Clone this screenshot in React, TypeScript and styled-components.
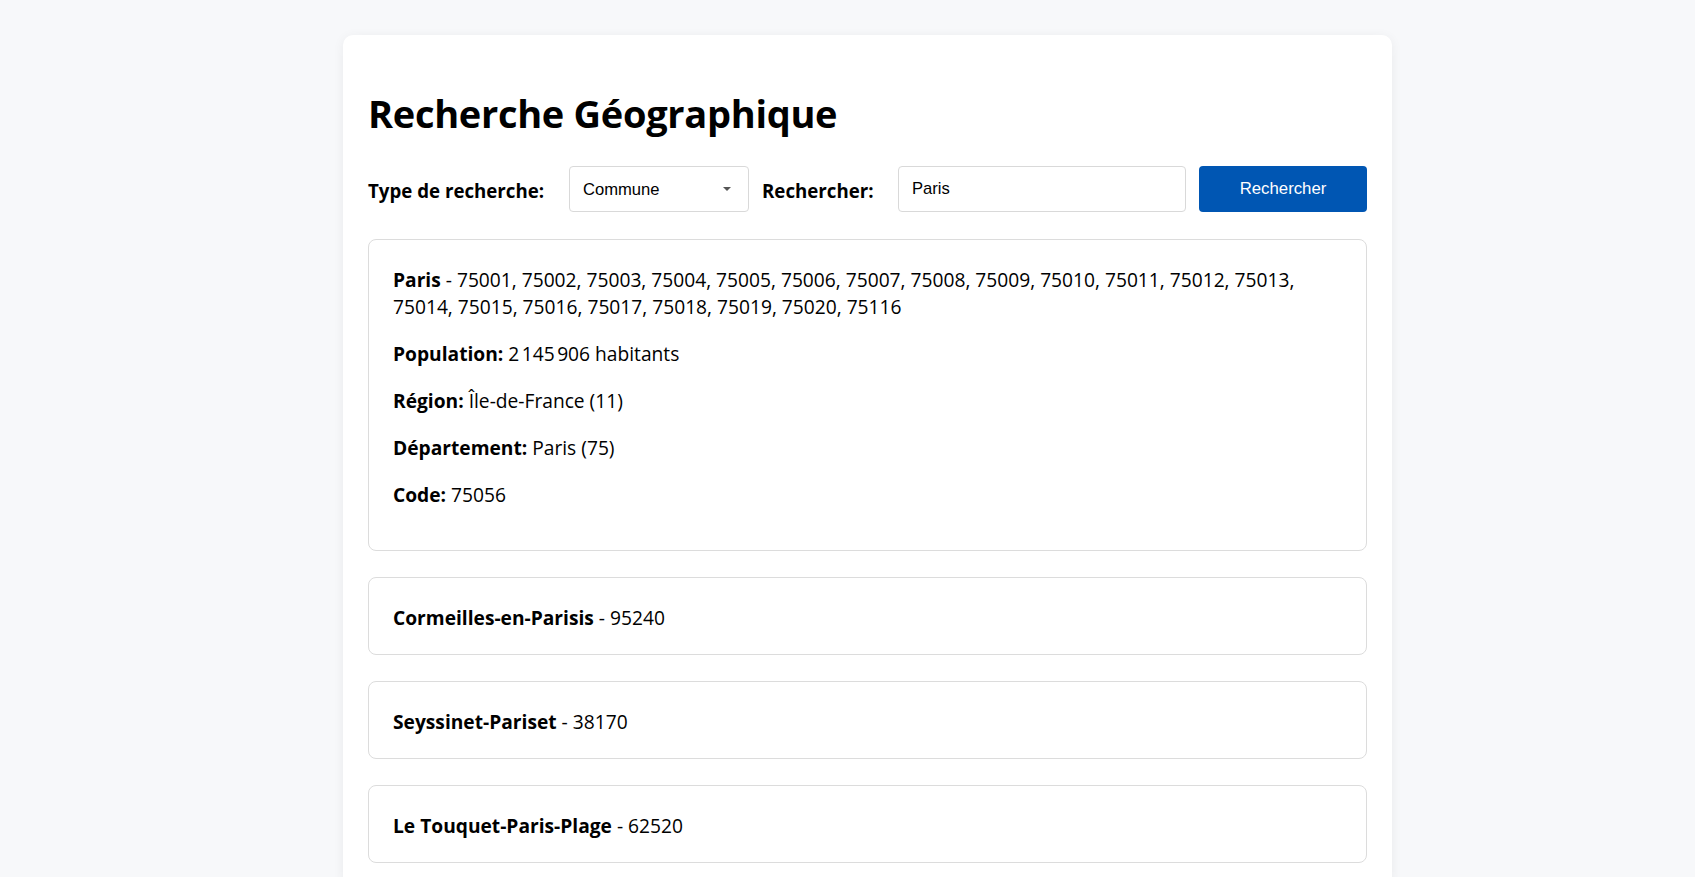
import React, { useState } from "react";
import styled, { createGlobalStyle } from "styled-components";

const GlobalStyle = createGlobalStyle`
  html, body {
    margin: 0;
    padding: 0;
    background: #f7f8fa;
    font-family: "Segoe UI", "Open Sans", "Noto Sans", sans-serif;
    color: #000;
  }
`;

const Page = styled.div`
  padding: 35px 0 40px 40px;
`;

const Panel = styled.div`
  width: 1049px;
  box-sizing: border-box;
  margin: 0 auto;
  background: #fff;
  border-radius: 10px;
  box-shadow: 0 2px 12px rgba(0, 0, 0, 0.06);
  padding: 53px 25px 25px;
`;

const Title = styled.h1`
  margin: 0 0 28px;
  font-size: 38px;
  font-weight: 700;
  line-height: 50px;
  letter-spacing: -0.3px;
`;

const SearchBar = styled.div`
  display: flex;
  align-items: center;
  gap: 13px;
  margin-bottom: 27px;
`;

const Label = styled.label<{ $width: number }>`
  width: ${(p) => p.$width}px;
  flex-shrink: 0;
  font-size: 18.7px;
  font-weight: 700;
  padding-top: 2px;
  white-space: nowrap;
`;

const SelectWrap = styled.div`
  position: relative;
  width: 180px;
  flex-shrink: 0;
`;

const Select = styled.select`
  appearance: none;
  width: 100%;
  height: 46px;
  box-sizing: border-box;
  padding: 0 30px 0 13px;
  border: 1px solid #d9d9d9;
  border-radius: 4px;
  background: #fff;
  font-family: "Liberation Sans", Arial, sans-serif;
  font-size: 16.6px;
  color: #000;
  outline: none;
`;

const Caret = styled.span`
  position: absolute;
  right: 18px;
  top: 21px;
  width: 0;
  height: 0;
  border-left: 4px solid transparent;
  border-right: 4px solid transparent;
  border-top: 4px solid #555;
  pointer-events: none;
`;

const Input = styled.input`
  flex: 1;
  min-width: 0;
  height: 46px;
  box-sizing: border-box;
  padding: 0 13px;
  border: 1px solid #d9d9d9;
  border-radius: 4px;
  font-family: "Liberation Sans", Arial, sans-serif;
  font-size: 16.6px;
  color: #000;
  outline: none;
`;

const Button = styled.button`
  width: 168px;
  height: 46px;
  flex-shrink: 0;
  border: none;
  border-radius: 4px;
  background: #0056b3;
  color: #fff;
  font-family: "Liberation Sans", Arial, sans-serif;
  font-size: 16.8px;
  cursor: pointer;
`;

const Results = styled.div`
  display: flex;
  flex-direction: column;
  gap: 26px;
`;

const ResultCard = styled.div`
  border: 1px solid #dcdcdc;
  border-radius: 8px;
  padding: 26px 24px 23px;
  font-size: 19.2px;
  line-height: 27px;
`;

const Line = styled.p`
  margin: 0;
`;

const Details = styled.div`
  margin: 20px 0 19px;
  display: flex;
  flex-direction: column;
  gap: 20px;
`;

const Name = styled.strong`
  font-weight: 700;
`;

const parisCodes = [
  "75001", "75002", "75003", "75004", "75005", "75006", "75007", "75008",
  "75009", "75010", "75011", "75012", "75013", "75014", "75015", "75016",
  "75017", "75018", "75019", "75020", "75116",
];

const others = [
  { nom: "Cormeilles-en-Parisis", cp: "95240" },
  { nom: "Seyssinet-Pariset", cp: "38170" },
  { nom: "Le Touquet-Paris-Plage", cp: "62520" },
];

function App() {
  const [type, setType] = useState("commune");
  const [query, setQuery] = useState("Paris");

  return (
    <Page>
      <GlobalStyle />
      <Panel>
        <Title>Recherche Géographique</Title>
        <SearchBar>
          <Label $width={188}>Type de recherche:</Label>
          <SelectWrap>
            <Select value={type} onChange={(e) => setType(e.target.value)}>
              <option value="commune">Commune</option>
              <option value="departement">Département</option>
              <option value="region">Région</option>
            </Select>
            <Caret />
          </SelectWrap>
          <Label $width={123}>Rechercher:</Label>
          <Input value={query} onChange={(e) => setQuery(e.target.value)} />
          <Button>Rechercher</Button>
        </SearchBar>

        <Results>
          <ResultCard>
            <Line>
              <Name>Paris</Name> - {parisCodes.join(", ")}
            </Line>
            <Details>
              <Line>
                <Name>Population:</Name> {(2145906).toLocaleString("fr-FR")} habitants
              </Line>
              <Line>
                <Name>Région:</Name> Île-de-France (11)
              </Line>
              <Line>
                <Name>Département:</Name> Paris (75)
              </Line>
              <Line>
                <Name>Code:</Name> 75056
              </Line>
            </Details>
          </ResultCard>
          {others.map((c) => (
            <ResultCard key={c.nom}>
              <Line>
                <Name>{c.nom}</Name> - {c.cp}
              </Line>
            </ResultCard>
          ))}
        </Results>
      </Panel>
    </Page>
  );
}

export default App;
